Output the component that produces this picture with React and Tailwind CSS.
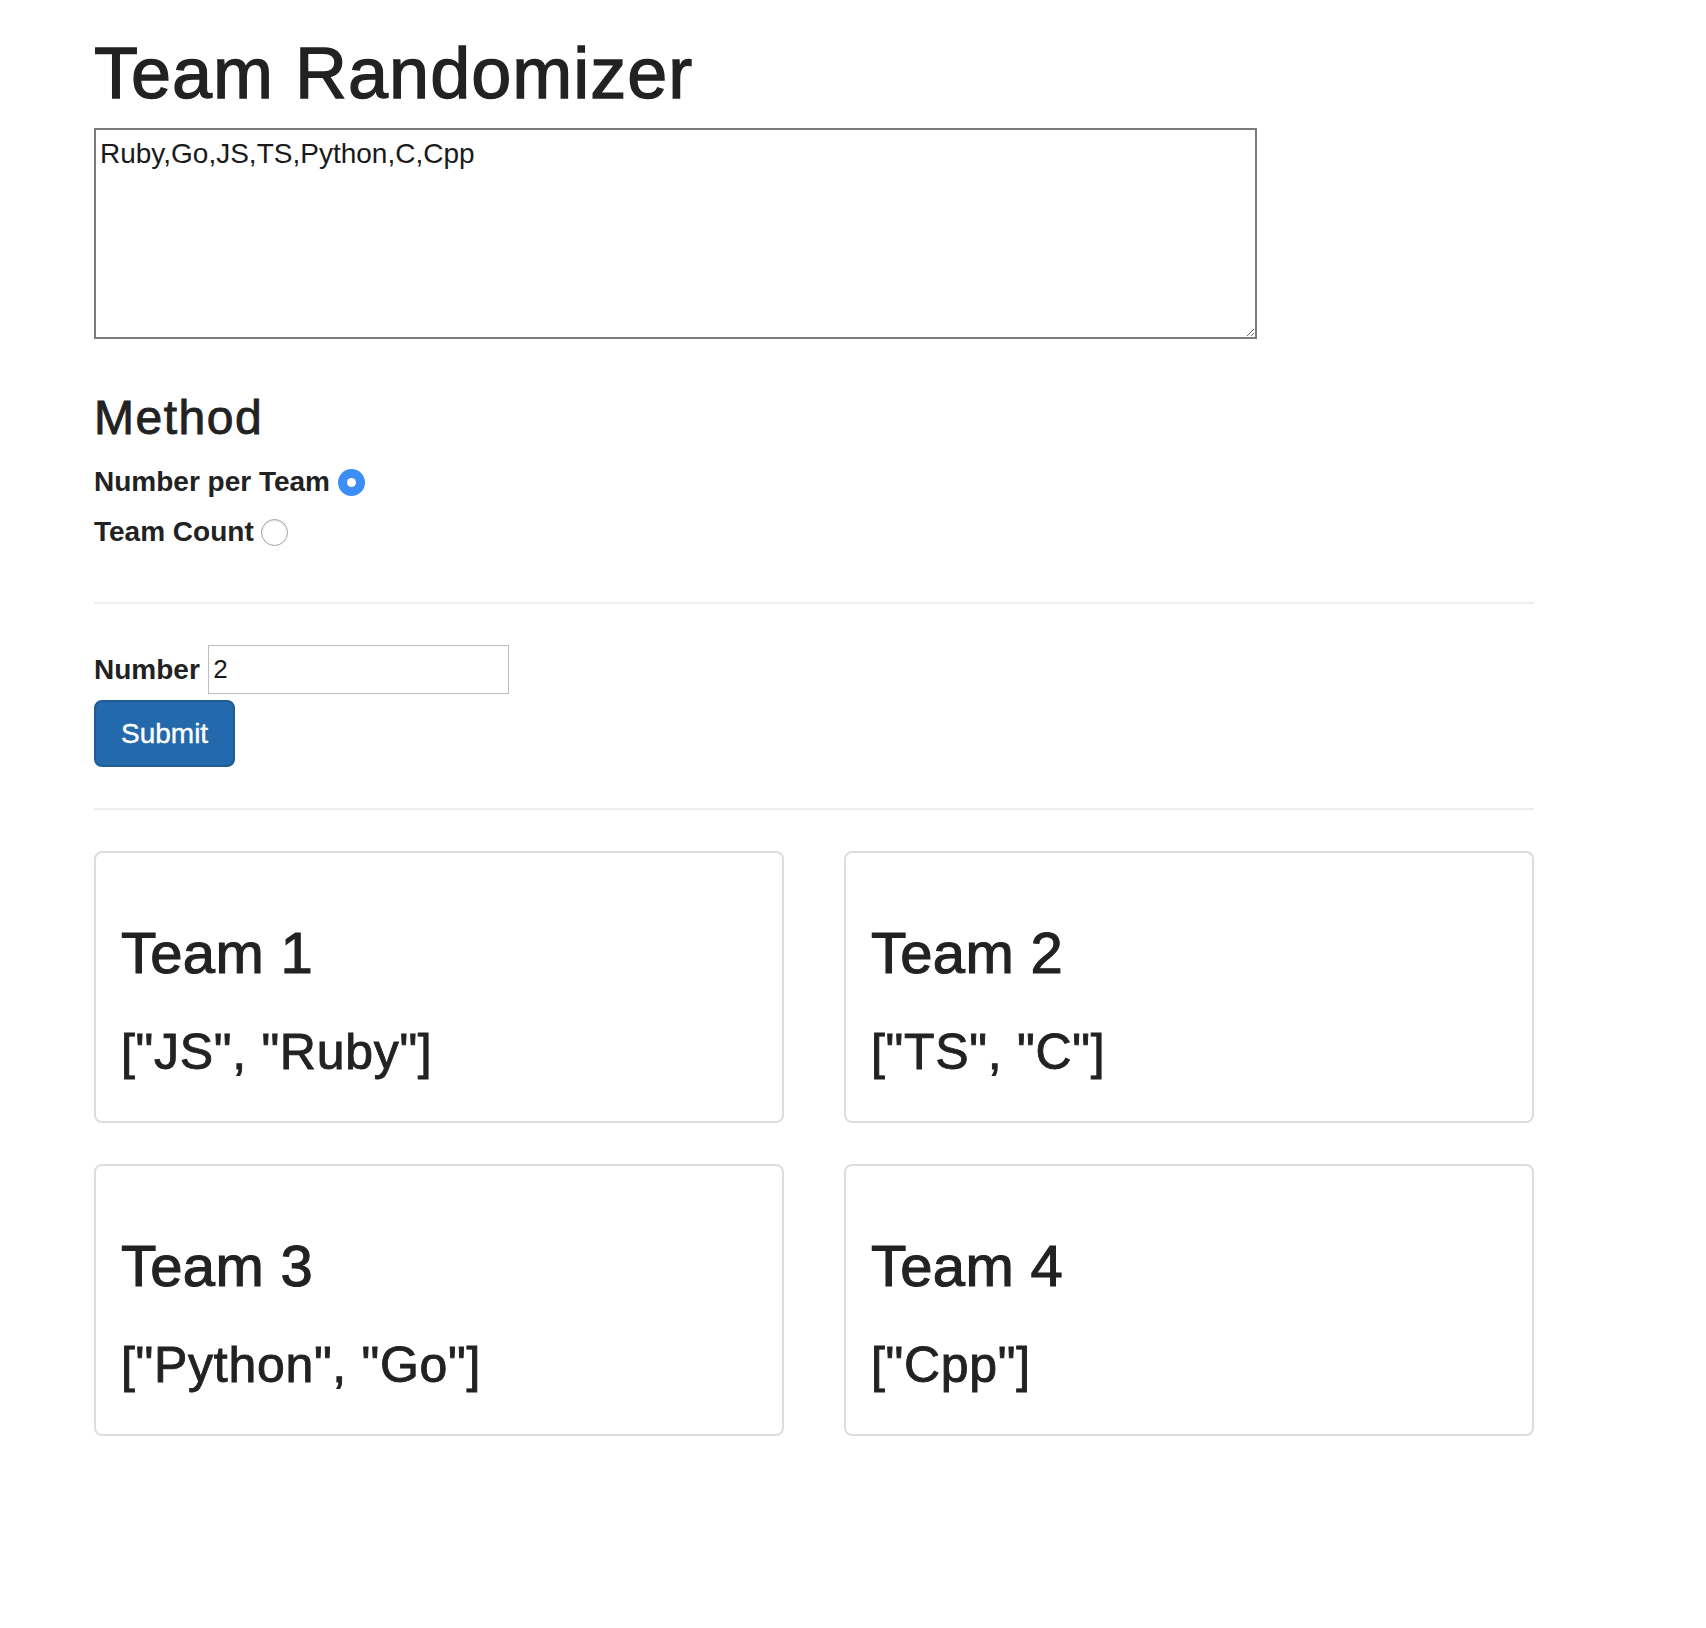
import React, { useState } from 'react';

const teams = [
  { name: 'Team 1', members: ['JS', 'Ruby'] },
  { name: 'Team 2', members: ['TS', 'C'] },
  { name: 'Team 3', members: ['Python', 'Go'] },
  { name: 'Team 4', members: ['Cpp'] },
];

function Radio({ checked, onClick }) {
  if (checked) {
    return (
      <span
        onClick={onClick}
        className="flex h-[27px] w-[27px] shrink-0 items-center justify-center rounded-full bg-[#3a8ef6]"
      >
        <span className="h-[9px] w-[9px] rounded-full bg-white" />
      </span>
    );
  }
  return (
    <span
      onClick={onClick}
      className="h-[27px] w-[27px] shrink-0 rounded-full border border-[#a3a3a3] bg-white shadow-[inset_0_1px_2px_rgba(0,0,0,0.12)]"
    />
  );
}

function TeamPanel({ team }) {
  const list = '[' + team.members.map((m) => `"${m}"`).join(', ') + ']';
  return (
    <div className="h-[272px] rounded-[8px] border-2 border-[#dddddd] bg-white pl-[25px] pt-[68px]">
      <h2 className="text-[58px] leading-[64px] tracking-[0.3px] [-webkit-text-stroke-width:1.1px]">{team.name}</h2>
      <p className="mt-[40px] text-[50px] leading-[55px] tracking-[0.7px] [-webkit-text-stroke-width:0.9px]">{list}</p>
    </div>
  );
}

export default function App() {
  const [method, setMethod] = useState('per-team');
  const [number, setNumber] = useState('2');

  return (
    <div className="min-h-screen bg-white font-['Liberation_Sans',Arial,sans-serif] text-[#222222]">
      <div className="ml-[64px] w-[1500px] px-[30px] pt-[33px] pb-[60px]">
        <h1 className="mb-[15px] text-[72px] leading-[80px] tracking-[1px] [-webkit-text-stroke-width:1.3px]">
          Team Randomizer
        </h1>

        <textarea
          defaultValue="Ruby,Go,JS,TS,Python,C,Cpp"
          className="block h-[211px] w-[1163px] resize border-2 border-[#7b7b7b] p-[4px] text-[28px] leading-[40px] text-[#1a1a1a] outline-none"
        />

        <h3 className="mt-[52px] text-[48px] leading-[53px] tracking-[1.5px] [-webkit-text-stroke-width:0.9px]">Method</h3>

        <div className="mt-[18px] flex flex-col gap-[10px] text-[28px] font-bold">
          <label className="flex h-[40px] items-center gap-[7.5px]">
            <span>Number per Team</span>
            <Radio checked={method === 'per-team'} onClick={() => setMethod('per-team')} />
          </label>
          <label className="flex h-[40px] items-center gap-[7px]">
            <span>Team Count</span>
            <Radio checked={method === 'count'} onClick={() => setMethod('count')} />
          </label>
        </div>

        <hr className="mt-[50px] border-t-2 border-[#eeeeee]" />

        <div className="mt-[41px] flex h-[49px] items-center gap-[8.5px]">
          <span className="text-[28px] font-bold leading-[40px]">Number</span>
          <input
            value={number}
            onChange={(e) => setNumber(e.target.value)}
            className="h-[49px] w-[301px] border border-[#bdbdbd] pl-[4px] text-[26px] text-[#1a1a1a] outline-none"
          />
        </div>

        <button className="mt-[6px] flex h-[67px] items-center rounded-[8px] border-2 border-[#1f5c96] bg-[#2369ab] px-[25px] text-[28px] leading-[40px] text-white [-webkit-text-stroke-width:0.4px]">
          Submit
        </button>

        <hr className="mt-[41px] border-t-2 border-[#eeeeee]" />

        <div className="mt-[41px] grid grid-cols-2 gap-x-[60px] gap-y-[41px]">
          {teams.map((team) => (
            <TeamPanel key={team.name} team={team} />
          ))}
        </div>
      </div>
    </div>
  );
}
